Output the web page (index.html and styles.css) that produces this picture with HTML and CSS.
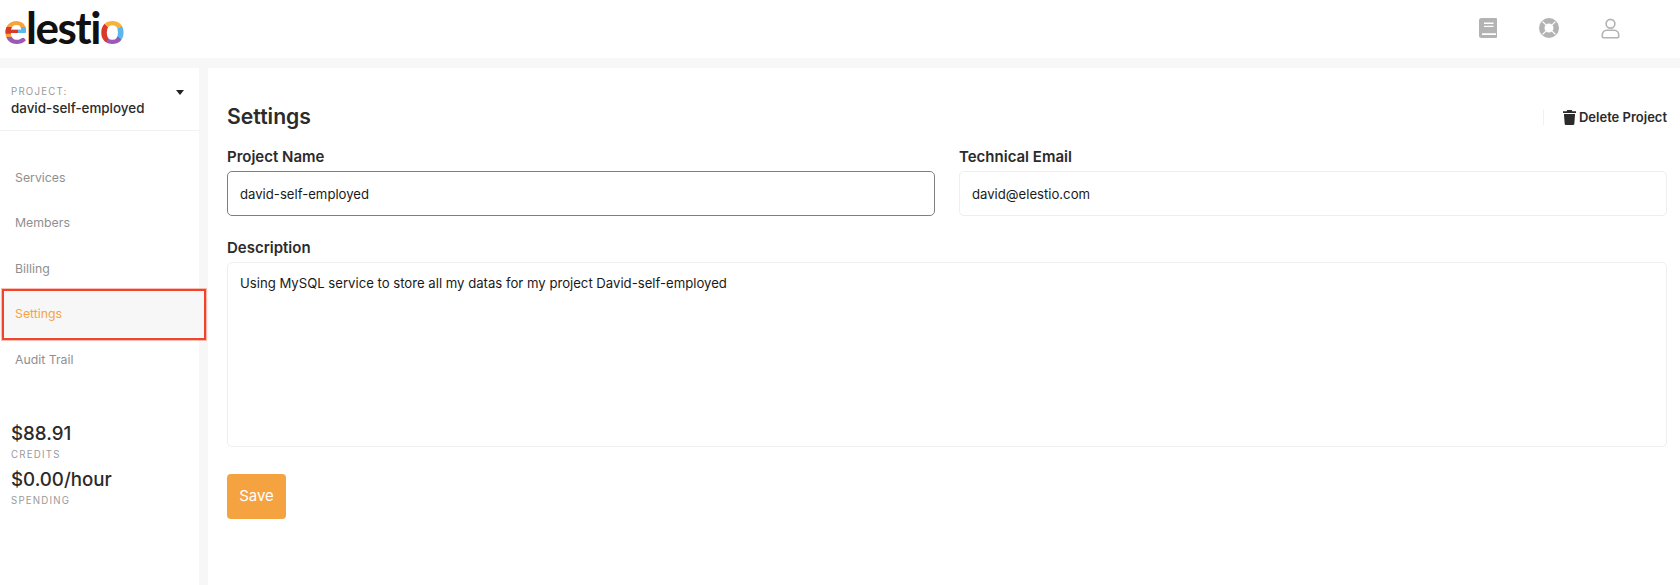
FILE: index.html
```html
<!DOCTYPE html>
<html lang="en">
<head>
    <meta charset="UTF-8">
    <title>Settings</title>
    <link rel="stylesheet" href="styles.css">
</head>
<body>
    <header class="topbar">
        <a class="logo" href="#"><span class="logo-e">e</span>lesti<span class="logo-o">o</span></a>
        <div class="top-icons">
            <svg class="top-icon book" viewBox="0 0 18 20">
                <path fill="#b3b3b3" fill-rule="evenodd" d="M2.500 0H17a1 1 0 0 1 1 1v18a1 1 0 0 1-1 1H2.500A2.500 2.500 0 0 1 0 17.500v-15A2.500 2.500 0 0 1 2.500 0zM5 4.500v1.400h9.500V4.500zm0 3.200v1.400h9.500V7.700zM3 15.300v1.700h14v-1.700z"/>
            </svg>
            <svg class="top-icon ring" viewBox="0 0 20 20">
                <path fill="#b3b3b3" fill-rule="evenodd" d="M10 0a10 10 0 1 1 0 20a10 10 0 0 1 0-20zm0 5.500a4.500 4.500 0 1 0 0 9a4.500 4.500 0 0 0 0-9z"/>
                <path stroke="#fff" stroke-width="1.300" d="M3.600 3.600l3.300 3.300M16.400 3.600l-3.300 3.300M3.600 16.400l3.300-3.300M16.400 16.400l-3.300-3.300"/>
            </svg>
            <svg class="top-icon user" viewBox="0 0 20 22">
                <circle cx="10" cy="6" r="4.600" fill="none" stroke="#b3b3b3" stroke-width="1.700"/>
                <path fill="none" stroke="#b3b3b3" stroke-width="1.700" d="M6 12.800h8a4.600 4.600 0 0 1 4.600 4.600v2.400a1 1 0 0 1-1 1H2.400a1 1 0 0 1-1-1v-2.400A4.600 4.600 0 0 1 6 12.800z"/>
            </svg>
        </div>
    </header>

    <div class="layout">
        <aside class="sidebar">
            <div class="project">
                <div>
                    <div class="small-label">PROJECT:</div>
                    <div class="project-name">david-self-employed</div>
                </div>
                <span class="caret"></span>
            </div>
            <nav class="side-nav">
                <a href="#">Services</a>
                <a href="#">Members</a>
                <a href="#">Billing</a>
                <a href="#" class="active">Settings</a>
                <a href="#">Audit Trail</a>
            </nav>
            <div class="stats">
                <div class="amount">$88.91</div>
                <div class="small-label">CREDITS</div>
                <div class="amount">$0.00/hour</div>
                <div class="small-label">SPENDING</div>
            </div>
        </aside>

        <main class="content">
            <div class="title-row">
                <h1>Settings</h1>
                <a class="delete" href="#">
                    <svg viewBox="0 0 14 16"><path fill="#2b2b2b" d="M4.600 0h4.800l.6 1.200H14v1.900H0V1.200h4zM1 4.200h12l-.8 10.400a1.400 1.400 0 0 1-1.400 1.400H3.200a1.400 1.400 0 0 1-1.400-1.400z"/></svg>
                    Delete Project
                </a>
            </div>
            <div class="fields">
                <div class="field">
                    <label>Project Name</label>
                    <div class="input focused">david-self-employed</div>
                </div>
                <div class="field">
                    <label>Technical Email</label>
                    <div class="input">david@elestio.com</div>
                </div>
                <div class="field wide">
                    <label>Description</label>
                    <div class="input textarea">Using MySQL service to store all my datas for my project David-self-employed</div>
                </div>
            </div>
            <button class="save">Save</button>
        </main>
    </div>
</body>
</html>
```
FILE: styles.css
```css
* {
    margin: 0;
    padding: 0;
    box-sizing: border-box;
}

body {
    font-family: Inter, Arial, sans-serif;
    background-color: #f7f7f7;
    color: #2b2b2b;
    height: 585px;
    overflow: hidden;
}

a {
    text-decoration: none;
    color: inherit;
}

/* Top bar */
.topbar {
    height: 58px;
    background: #fff;
    display: flex;
    justify-content: space-between;
    align-items: center;
}

.logo {
    font-family: Lato, Arial, sans-serif;
    font-weight: 700;
    font-size: 44px;
    line-height: 54px;
    color: #111;
    padding-left: 4px;
    padding-bottom: 4px;
    letter-spacing: -1.500px;
}

.logo-e,
.logo-o {
    -webkit-background-clip: text;
    background-clip: text;
    color: transparent;
}

.logo-e {
    background-image:
        linear-gradient(to right, #d9392b 62%, #5db7ec 62%),
        linear-gradient(#f5a33b 0 56%, #f5a33b 56% 70%, #9a59b5 70%);
    background-size: 100% 13%, 100% 100%;
    background-position: 0 58%, 0 0;
    background-repeat: no-repeat;
}

.logo-o {
    background-image: conic-gradient(from 0deg at 50% 59%, #f7b23b 0 17%, #5db7ec 17% 36%, #9a59b5 36% 58%, #d9392b 58% 88%, #f7b23b 88% 100%);
}

.top-icons {
    display: flex;
    align-items: center;
    gap: 42px;
    padding-right: 60px;
    padding-bottom: 2px;
}

.top-icon {
    display: block;
}

.book {
    width: 18px;
    height: 20px;
}

.ring {
    width: 20px;
    height: 20px;
}

.user {
    width: 19px;
    height: 21px;
}

/* Layout */
.layout {
    margin-top: 10px;
    display: grid;
    grid-template-columns: 199px 1fr;
    column-gap: 9px;
    height: 517px;
}

.sidebar,
.content {
    background: #fff;
}

/* Sidebar */
.project {
    height: 63px;
    padding: 17px 15px 0 11px;
    display: flex;
    justify-content: space-between;
    border-bottom: 1px solid #f1f1f1;
}

.small-label {
    font-size: 9.700px;
    line-height: 14px;
    letter-spacing: 1.200px;
    color: #9a9a9a;
}

.project-name {
    font-size: 13.400px;
    font-weight: 500;
    line-height: 18px;
}

.caret {
    margin-top: 5px;
    border-left: 4.500px solid transparent;
    border-right: 4.500px solid transparent;
    border-top: 5px solid #222;
    height: 0;
}

.side-nav {
    margin-top: 24px;
    display: flex;
    flex-direction: column;
}

.side-nav a {
    height: 45.400px;
    line-height: 45.400px;
    padding-left: 15px;
    font-size: 12.300px;
    color: #8f8f8f;
}

.side-nav a.active {
    position: relative;
    color: #f5a342;
    background: #f7f7f7;
}

/* annotation box drawn over the active row */
.side-nav a.active::after {
    content: "";
    position: absolute;
    left: 2px;
    right: -7px;
    top: -2px;
    bottom: -3px;
    border: 2px solid #f0452a;
    box-shadow: 0 0 0 1px rgba(240, 69, 42, 0.35);
}

.stats {
    margin-top: 40px;
    padding-left: 11px;
}

.amount {
    font-size: 18.700px;
    font-weight: 500;
    line-height: 24px;
    margin-top: 6px;
}

.stats .small-label {
    margin-top: 2px;
}

/* Main content */
.content {
    padding: 35px 13px 0 19px;
}

.title-row {
    display: flex;
    justify-content: space-between;
    align-items: center;
    height: 28px;
}

h1 {
    font-size: 21.200px;
    font-weight: 600;
    line-height: 26px;
    padding-bottom: 2px;
}

.delete {
    display: flex;
    align-items: center;
    gap: 3px;
    font-size: 13px;
    font-weight: 600;
    height: 16px;
    border-left: 1px solid #f1f1f1;
    padding-left: 19px;
}

.delete svg {
    width: 13px;
    height: 15px;
}

.fields {
    margin-top: 16px;
    display: grid;
    grid-template-columns: 1fr 1fr;
    column-gap: 24px;
    row-gap: 22px;
}

.field.wide {
    grid-column: 1 / -1;
}

label {
    display: block;
    font-size: 15px;
    font-weight: 600;
    line-height: 20px;
    margin-bottom: 4px;
}

.input {
    height: 45px;
    line-height: 44px;
    padding: 0 12px;
    font-size: 13.150px;
    color: #1a1a1a;
    border: 1px solid #eeeeee;
    border-radius: 5px;
    background: #fff;
}

.input.focused {
    border-color: #7f7f7f;
}

.input.textarea {
    height: 185px;
    line-height: 20px;
    padding-top: 10px;
}

.save {
    display: block;
    margin-top: 27px;
    width: 59px;
    height: 45px;
    padding-bottom: 2px;
    border: none;
    border-radius: 4px;
    background: #f5a340;
    color: #fff;
    font-family: inherit;
    font-size: 15px;
}
```
